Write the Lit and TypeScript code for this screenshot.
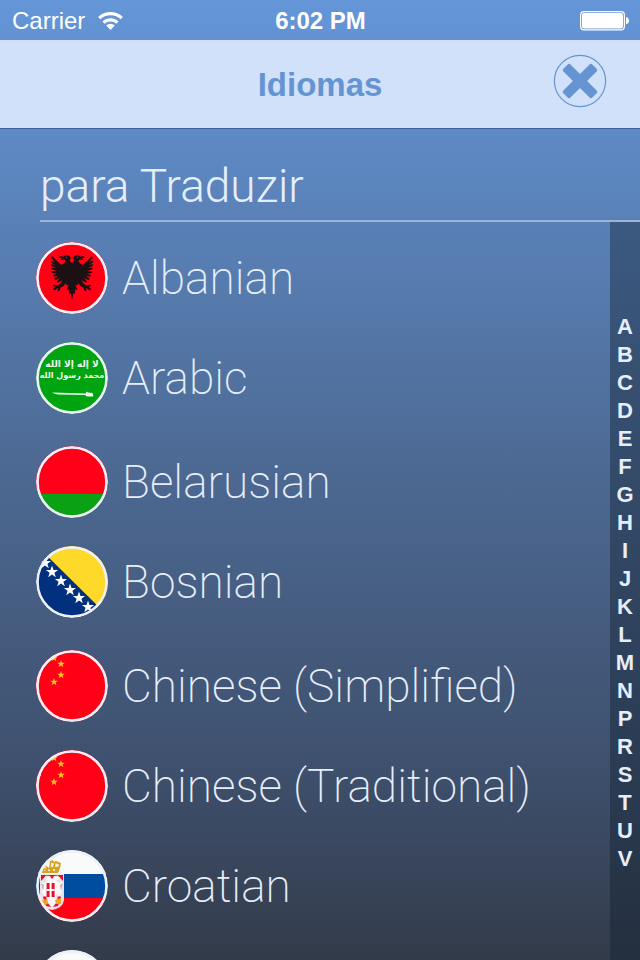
import { LitElement, html, css, svg, type SVGTemplateResult } from "lit";
import { customElement, property } from "lit/decorators.js";

type FlagName = "albania" | "saudi" | "belarus" | "bosnia" | "china" | "serbia" | "czech";

interface Language {
  name: string;
  flag: FlagName;
}

interface Section {
  letter: string;
  languages: Language[];
}

const SECTIONS: Section[] = [
  {
    letter: "A",
    languages: [
      { name: "Albanian", flag: "albania" },
      { name: "Arabic", flag: "saudi" },
    ],
  },
  {
    letter: "B",
    languages: [
      { name: "Belarusian", flag: "belarus" },
      { name: "Bosnian", flag: "bosnia" },
    ],
  },
  {
    letter: "C",
    languages: [
      { name: "Chinese (Simplified)", flag: "china" },
      { name: "Chinese (Traditional)", flag: "china" },
      { name: "Croatian", flag: "serbia" },
      { name: "Czech", flag: "czech" },
    ],
  },
];

const INDEX = "ABCDEFGHIJKLMNPRSTUV".split("");

/** Points of a five-pointed star, one tip up. */
function star(cx: number, cy: number, r: number): string {
  const points: string[] = [];
  for (let i = 0; i < 10; i++) {
    const radius = i % 2 ? r * 0.4 : r;
    const angle = (Math.PI / 5) * i - Math.PI / 2;
    points.push(`${(cx + radius * Math.cos(angle)).toFixed(2)},${(cy + radius * Math.sin(angle)).toFixed(2)}`);
  }
  return points.join(" ");
}

/** One half of the double-headed eagle; the other half is its mirror image. */
const eagleHalf = svg`
  <path d="M36 21 L34.6 20 L33.8 17.6 L35 16 L33 13.6 L29.6 13.2 L27.4 14.6 L24 14.2 L23 15.8 L26 16 L24.6 18
    L28 17.4 L29.6 18.6 L28.6 21 L25.4 23 L22.6 20.6 L20 18 L16 14 L15.2 16 L19 20 L15 18.4 L15 20.4 L19.4 23
    L15 22 L15.4 24 L20 26 L15.2 25.6 L16 27.6 L20.6 28.8 L15.4 29.4 L16.6 31.2 L21 31.4 L16.4 33.4 L18 34.8
    L22 33.8 L18 37 L20 38 L24 36 L20.6 40 L22.8 40.6 L26.4 38 L24.6 41.6 L21.6 43.8 L18 42.6 L16.4 44 L19.4 44.8
    L16.4 47.4 L18.6 48 L22 46 L21.6 49.4 L23.6 48.4 L24.6 45.4 L27.6 44 L30 41 L30.4 43.6 L32.6 43 L30.6 48
    L32.8 47.4 L33 52 L34.6 51 L36 58 Z"/>`;

const FLAGS: Record<FlagName, SVGTemplateResult> = {
  albania: svg`
    <rect width="72" height="72" fill="#ff0014"/>
    <g fill="#1c1014">${eagleHalf}<g transform="matrix(-1 0 0 1 72 0)">${eagleHalf}</g></g>
    <g fill="#ff0014"><circle cx="30.4" cy="15.4" r="0.7"/><circle cx="41.6" cy="15.4" r="0.7"/></g>`,
  saudi: svg`
    <rect width="72" height="72" fill="#00a310"/>
    <g fill="#eefbee" font-family="DejaVu Sans, sans-serif" font-weight="700" text-anchor="middle">
      <text x="36" y="25" font-size="9">لا إله إلا الله</text>
      <text x="36" y="36" font-size="8">محمد رسول الله</text>
    </g>
    <path d="M16 50.4 L50 51.4 L50 49.6 L52 50.6 L56.6 51 L57.4 54.6 L53 54.6 L50 54.2 L49.4 53 L22 52.6 Q18 52 16 50.4 Z" fill="#eefbee"/>`,
  belarus: svg`
    <rect width="72" height="48" fill="#ff0018"/>
    <rect y="48" width="72" height="24" fill="#0ba115"/>`,
  bosnia: svg`
    <rect width="72" height="72" fill="#00307e"/>
    <path d="M1 0 L72 70 V0 Z" fill="#ffd92a"/>
    <g fill="#fff">
      ${[[9, 17], [16, 26], [25, 35], [34, 44], [43, 52], [52, 61]].map(
        ([x, y]) => svg`<polygon points=${star(x, y, 6.4)}/>`,
      )}
    </g>`,
  china: svg`
    <rect width="72" height="72" fill="#ff0016"/>
    <g fill="#ffc61e">
      <polygon points=${star(-4, 28, 10)}/>
      ${[[18, 8], [25, 14], [25, 25], [18, 32]].map(([x, y]) => svg`<polygon points=${star(x, y, 4)}/>`)}
    </g>`,
  serbia: svg`
    <rect width="72" height="24" fill="#f8fbfa"/>
    <rect y="24" width="72" height="24" fill="#004da0"/>
    <rect y="48" width="72" height="24" fill="#ff0014"/>
    <path d="M4 24 H28 V50 Q27 58 16 60 Q5 58 4 50 Z" fill="#e9e3e6"/>
    <path d="M5 25 H27 V31 L22 25.6 L18 26 L16 29 L14 26 L10 25.6 L5 31 Z" fill="#e8112c"/>
    <path d="M7 47 L10 45 L11 52 L15 57 L10 56 Z M25 47 L22 45 L21 52 L17 57 L22 56 Z" fill="#e8112c"/>
    <path d="M16 30 L13 27 L9 27 L8 29 L11 30 L10 33 L5 32 L6 42 L9 47 L12 44 L12 52 L16 57 L20 52 L20 44 L23 47
      L26 42 L27 32 L22 33 L21 30 L24 29 L23 27 L19 27 Z" fill="#fbf7f8"/>
    <path d="M5 33 L8 35 L7 41 Z M27 33 L24 35 L25 41 Z" fill="#b9b3bb"/>
    <rect x="10.6" y="33" width="8" height="14" fill="#e2132d"/>
    <path d="M13.6 33 H15.6 V39 H18.6 V41 H15.6 V47 H13.6 V41 H10.6 V39 H13.6 Z" fill="#fff"/>
    <path d="M6 50 L11 49 L12 54 L8 55 Z M19 50 L25 48 L25 54 L20 54 Z" fill="#f0a51c"/>
    <path d="M6 23 L7 17 L10 19 L9 15 L13 18 L14 11 L17 10 L18 12 L20 11 L25 13 L24 18 L22 23 Z" fill="#d6a21f"/>
    <path d="M15.4 12.6 L14.6 17 H17 L18 13.4 Z M19.6 13.2 L19 17 H22 L23 14.2 Z M8.4 19.6 L8.2 21 H10 Z M12 19.6 V21 H14 V19.6 Z M17 19 V21 H19 V19 Z" fill="#f6eedd"/>`,
  czech: svg`
    <rect width="72" height="36" fill="#f8fbfa"/>
    <rect y="36" width="72" height="36" fill="#e01228"/>
    <path d="M0 0 L36 36 L0 72 Z" fill="#0c4a93"/>`,
};

@customElement("flag-badge")
export class FlagBadge extends LitElement {
  @property() flag: FlagName = "albania";

  static styles = css`
    :host {
      display: block;
      flex: none;
      width: 72px;
      height: 72px;
      border-radius: 50%;
      overflow: hidden;
    }
    .art {
      display: block;
      width: 100%;
      height: 100%;
    }
  `;

  render() {
    return html`
      <svg class="art" viewBox="0 0 72 72" aria-hidden="true">
        ${FLAGS[this.flag]}
        <circle cx="36" cy="36" r="34.6" fill="none" stroke="#eef0f8" stroke-width="2.8" />
      </svg>
    `;
  }
}

@customElement("status-bar")
export class StatusBar extends LitElement {
  static styles = css`
    :host {
      display: grid;
      grid-template-columns: 1fr auto 1fr;
      align-items: center;
      height: 38px;
      padding: 2px 11px 0 12px;
      color: #fff;
      font-size: 24px;
      line-height: 38px;
    }
    .network {
      display: flex;
      align-items: center;
      gap: 13px;
    }
    .time {
      font-weight: 700;
    }
    .battery {
      justify-self: end;
    }
    svg {
      display: block;
    }
  `;

  render() {
    return html`
      <div class="network">
        <span>Carrier</span>
        <svg width="25" height="18" viewBox="0 0 25 18" role="img" aria-label="Wi-Fi">
          <g fill="none" stroke="#fff" stroke-width="3.2">
            <path d="M1.2 6.2 A16.4 16.4 0 0 1 23.8 6.2" />
            <path d="M5.6 10.6 A10 10 0 0 1 19.4 10.6" />
          </g>
          <path d="M12.5 18 L8.2 13.6 A6.2 6.2 0 0 1 16.8 13.6 Z" fill="#fff" />
        </svg>
      </div>
      <span class="time">6:02 PM</span>
      <svg class="battery" width="49" height="20" viewBox="0 0 49 20" role="img" aria-label="Battery full">
        <rect x="0.6" y="0.6" width="43.8" height="18.2" rx="3.4" fill="none" stroke="#fff" stroke-width="1.2" />
        <rect x="2" y="2" width="41" height="15.4" rx="2" fill="#fff" />
        <path d="M46 6 Q49 7 49 9.7 Q49 12.4 46 13.4 Z" fill="#fff" />
      </svg>
    `;
  }
}

@customElement("app-root")
export class AppRoot extends LitElement {
  static styles = css`
    :host {
      display: flex;
      flex-direction: column;
      height: 100vh;
      overflow: hidden;
      background: linear-gradient(#6496d8, #5b84bc 20%, #4c6891 50%, #3e506d 80%, #333b4a);
      font-family: "Liberation Sans", Arial, sans-serif;
    }
    .nav {
      display: grid;
      grid-template-columns: 1fr auto 1fr;
      align-items: center;
      height: 88px;
      padding: 0 33px;
      background: #d1e1f9;
      border-bottom: 1px solid #3d619c;
    }
    .nav-title {
      grid-column: 2;
      margin: 0;
      padding-top: 2px;
      color: #6594d3;
      font-size: 33px;
      line-height: 40px;
      font-weight: 700;
    }
    .close {
      justify-self: end;
      padding: 0 0 6px;
      border: 0;
      background: none;
      cursor: pointer;
    }
    .close svg {
      display: block;
    }
    .heading {
      margin: 0 0 0 40px;
      padding: 28px 0 4px;
      border-bottom: 2px solid #9db4d8;
      color: #e6eefa;
      font-family: Roboto, "Liberation Sans", sans-serif;
      font-size: 46px;
      line-height: 59px;
      font-weight: 300;
    }
    .body {
      display: flex;
      flex: 1;
      min-height: 0;
    }
    .list {
      flex: 1;
      overflow-y: auto;
      scrollbar-width: none;
      padding: 2px 0 0 36px;
    }
    .section {
      margin: 0;
      padding: 4px 0 0;
      list-style: none;
    }
    .language {
      display: flex;
      align-items: center;
      gap: 14px;
      width: 100%;
      height: 100px;
      padding: 0;
      border: 0;
      background: none;
      color: #e6eefa;
      font-family: Roboto, "Liberation Sans", sans-serif;
      font-size: 46px;
      line-height: 46px;
      font-weight: 160;
      text-align: left;
      cursor: pointer;
    }
    .index {
      display: flex;
      flex-direction: column;
      justify-content: center;
      width: 30px;
      padding-top: 4px;
      background: rgba(16, 30, 46, 0.4);
    }
    .letter {
      color: #e6eefa;
      font-size: 22px;
      line-height: 28px;
      font-weight: 700;
      text-align: center;
      text-decoration: none;
    }
  `;

  render() {
    return html`
      <status-bar></status-bar>
      <header class="nav">
        <h1 class="nav-title">Idiomas</h1>
        <button class="close" type="button" aria-label="Fechar">
          <svg width="54" height="54" viewBox="0 0 54 54" aria-hidden="true">
            <circle cx="27" cy="27" r="25.6" fill="none" stroke="#6594d3" stroke-width="1.2" />
            <g fill="#6594d3" transform="rotate(45 27 27)">
              <rect x="6.5" y="22" width="41" height="10" rx="2" />
              <rect x="22" y="6.5" width="10" height="41" rx="2" />
            </g>
          </svg>
        </button>
      </header>
      <h2 class="heading">para Traduzir</h2>
      <div class="body">
        <main class="list">
          ${SECTIONS.map(
            (section) => html`
              <ul class="section" id=${section.letter}>
                ${section.languages.map(
                  (language) => html`
                    <li>
                      <button class="language" type="button">
                        <flag-badge .flag=${language.flag}></flag-badge>
                        <span>${language.name}</span>
                      </button>
                    </li>
                  `,
                )}
              </ul>
            `,
          )}
        </main>
        <nav class="index" aria-label="Índice">
          ${INDEX.map((letter) => html`<a class="letter" href="#${letter}">${letter}</a>`)}
        </nav>
      </div>
    `;
  }
}
